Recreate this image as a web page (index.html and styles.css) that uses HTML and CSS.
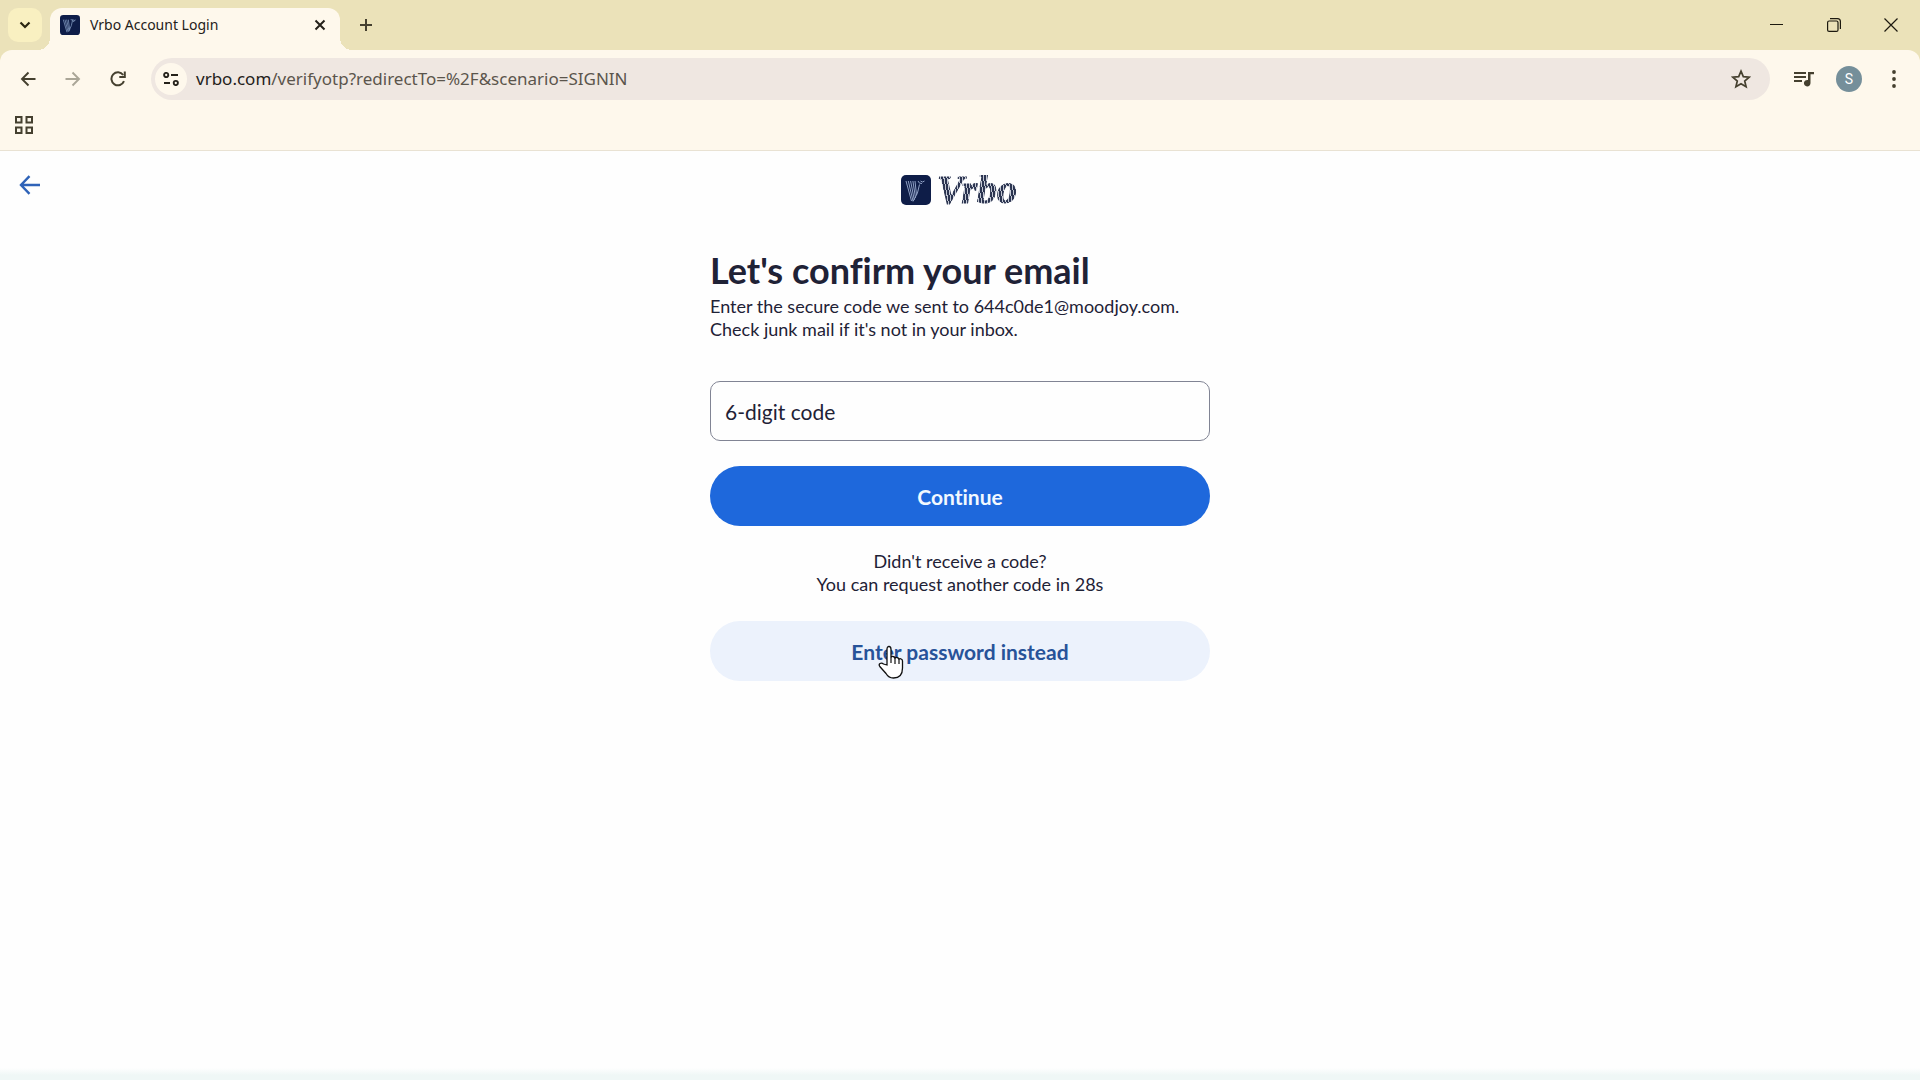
FILE: index.html
```html
<!DOCTYPE html>
<html lang="en">
<head>
<meta charset="utf-8">
<title>Vrbo Account Login</title>
<link rel="stylesheet" href="styles.css">
</head>
<body>
<header class="browser">
  <div class="tab-strip">
    <button class="tab-search" aria-label="Search tabs"><svg width="12" height="8" viewBox="0 0 12 8"><path d="M1.5 1.5 6 6l4.500-4.500" fill="none" stroke="currentColor" stroke-width="2.200"/></svg></button>
    <div class="tab">
      <svg class="favicon" width="20" height="20" viewBox="0 0 30 30"><rect width="30" height="30" rx="5" fill="#0e1d48"/><g fill="none" stroke="#7f97bd" stroke-width="1.200"><path d="M5 7l5.500 19M7.500 7l4.500 18M10 7l3.500 17M12.500 7l2 15"/><path d="M16 7l6 1M19 7q-1 9-6 18M23 7q-1 3-4 3"/></g></svg>
      <span class="tab-title">Vrbo Account Login</span>
      <button class="tab-close" aria-label="Close tab"><svg width="12" height="12" viewBox="0 0 12 12"><path d="M1.500 1.500l9 9M10.500 1.500l-9 9" stroke="currentColor" stroke-width="2"/></svg></button>
    </div>
    <button class="new-tab" aria-label="New tab"><svg width="14" height="14" viewBox="0 0 14 14"><path d="M7 1v12M1 7h12" stroke="currentColor" stroke-width="2"/></svg></button>
    <div class="window-controls">
      <button aria-label="Minimize"><svg width="14" height="14" viewBox="0 0 14 14"><path d="M0 6.500h13" stroke="currentColor"/></svg></button>
      <button aria-label="Restore"><svg width="14" height="14" viewBox="0 0 14 14" fill="none" stroke="currentColor" stroke-width="1.200"><rect x=".6" y="3" width="10.400" height="10.400" rx="1.500"/><path d="M3 .6h7.500q2.900 0 2.900 2.900v7.500"/></svg></button>
      <button aria-label="Close"><svg width="14" height="14" viewBox="0 0 14 14"><path d="M.5.5l13 13M13.500.5l-13 13" stroke="currentColor" stroke-width="1.200"/></svg></button>
    </div>
  </div>
  <div class="toolbar">
    <button class="tool" aria-label="Back"><svg width="16" height="16" viewBox="0 0 16 16"><path d="M15.500 8H2M8.500 1.500 2 8l6.500 6.500" fill="none" stroke="currentColor" stroke-width="1.900"/></svg></button>
    <button class="tool tool-off" aria-label="Forward"><svg width="16" height="16" viewBox="0 0 16 16"><path d="M.5 8H14M7.500 1.500 14 8l-6.500 6.500" fill="none" stroke="currentColor" stroke-width="1.900"/></svg></button>
    <button class="tool" aria-label="Reload"><svg width="16" height="16" viewBox="0 0 16 16"><path d="M14 10.200A6.500 6.500 0 1 1 13.200 4" fill="none" stroke="currentColor" stroke-width="2"/><path d="M15.800.5V7H9.300V5h4.500V.5z" fill="currentColor"/></svg></button>
    <div class="address">
      <button class="site-info" aria-label="Site information"><svg width="16" height="14" viewBox="0 0 16 14" fill="none" stroke="currentColor" stroke-width="1.900"><circle cx="3.200" cy="3" r="2.100"/><path d="M8 3h7M1 11h6"/><circle cx="12.800" cy="11" r="2.100"/></svg></button>
      <div class="url"><span class="host">vrbo.com</span>/verifyotp?redirectTo=%2F&amp;scenario=SIGNIN</div>
      <button class="star" aria-label="Bookmark this tab"><svg width="20" height="20" viewBox="0 0 20 20"><path d="M10 2.200l2.300 5.400 5.900.5-4.500 3.900 1.400 5.800-5.100-3.100-5.100 3.100 1.400-5.800L1.800 8.100l5.900-.5z" fill="none" stroke="currentColor" stroke-width="1.700"/></svg></button>
    </div>
    <button class="tool" aria-label="Media controls"><svg width="20" height="16" viewBox="0 0 20 16" fill="currentColor"><path d="M0 1h12v2H0zM0 5h12v2H0zM0 9h8v2H0zM14 1h6v2.200h-3.500V12A3.300 3.300 0 1 1 14 9z"/></svg></button>
    <button class="tool" aria-label="Profile"><span class="avatar">S</span></button>
    <button class="tool" aria-label="Menu"><svg width="4" height="18" viewBox="0 0 4 18" fill="currentColor"><circle cx="2" cy="2" r="1.900"/><circle cx="2" cy="9" r="1.900"/><circle cx="2" cy="16" r="1.900"/></svg></button>
  </div>
  <div class="bookmarks">
    <button class="apps" aria-label="Apps"><svg width="18" height="18" viewBox="0 0 18 18" fill="none" stroke="currentColor" stroke-width="2"><path d="M1 1h5.500v5.500H1zM11.500 1H17v5.500h-5.500zM1 11.500h5.500V17H1zM11.500 11.500H17V17h-5.500z"/></svg></button>
  </div>
</header>

<main class="page">
  <div class="page-head">
    <a class="back" href="#" aria-label="Back"><svg width="22" height="20" viewBox="0 0 22 20"><path d="M21 10H2M10.500 1.200 2 10l8.500 8.800" fill="none" stroke="currentColor" stroke-width="2.400"/></svg></a>
    <div class="logo">
      <svg width="30" height="30" viewBox="0 0 30 30"><rect width="30" height="30" rx="5" fill="#0e1d48"/><g fill="none" stroke="#8fa0c4" stroke-width="1"><path d="M5 6l5.500 20M7.300 6l4.700 20M9.600 6l3.700 19M11.900 6l2.600 17M14 6l1.500 14"/><path d="M17 6q1 3 4 2.500M19.500 6q2 2 4 0M18.500 9.500q-1 9-6.500 17"/></g></svg>
      <span class="wordmark">Vrbo</span>
    </div>
  </div>

  <form class="verify">
    <h1>Let's confirm your email</h1>
    <p class="intro">Enter the secure code we sent to 644c0de1@moodjoy.com.<br>Check junk mail if it's not in your inbox.</p>
    <div class="field">
      <label for="code">6-digit code</label>
      <input id="code" type="text" inputmode="numeric" maxlength="6">
    </div>
    <button class="primary" type="submit">Continue</button>
    <p class="resend">Didn't receive a code?<br>You can request another code in 28s</p>
    <button class="secondary" type="button">Enter password instead
      <svg class="pointer" width="26" height="34" viewBox="0 0 26 34"><path d="M9 20V4.500Q9 1.500 11 1.500t2 3V13q0-2 2-1.500 2 .2 2 2.500 0-2 2-1.500 2 .3 2 2.500 0-1.600 1.800-1.200 1.700.4 1.700 2.200v7q0 10-9 10-5 0-7.500-4.500L1.800 21.500Q.5 19.500 2 18.500q1.800-1 3.500.5z" fill="#fff" stroke="#111" stroke-width="1.300"/><path d="M13 13v5M17 14v5M21 15v4" stroke="#111" stroke-width="1.200"/></svg>
    </button>
  </form>
</main>
<footer class="page-edge"></footer>
</body>
</html>
```
FILE: styles.css
```css
* { box-sizing: border-box; }

body {
  display: flex;
  flex-direction: column;
  min-height: 100vh;
  margin: 0;
  background: #fefefe;
  color: #1f2236;
  font-family: Lato, "Liberation Sans", sans-serif;
  font-variant-ligatures: none;
}

button {
  display: flex;
  align-items: center;
  justify-content: center;
  padding: 0;
  border: 0;
  background: none;
  color: inherit;
  font: inherit;
  font-variant-ligatures: none;
}

svg { display: block; flex: none; }

/* Browser frame */
.browser {
  background: #ebe2b9;
  color: #45402f;
  font-family: "Noto Sans", "Open Sans", sans-serif;
}

.tab-strip {
  display: flex;
  align-items: center;
  height: 50px;
  padding: 0 1px 0 8px;
}

.tab-search {
  width: 34px;
  height: 34px;
  margin-right: 8px;
  border-radius: 10px;
  background: #f9f0c1;
  color: #2a2510;
}

.tab {
  position: relative;
  display: flex;
  align-items: center;
  align-self: flex-end;
  gap: 10px;
  width: 290px;
  height: 42px;
  padding: 0 12px 8px 10px;
  border-radius: 12px 12px 0 0;
  background: #fef8ec;
  color: #24211a;
}

.tab::before,
.tab::after {
  content: "";
  position: absolute;
  bottom: 0;
  width: 12px;
  height: 12px;
}

.tab::before {
  right: 100%;
  background: radial-gradient(circle at 0 0, transparent 12px, #fef8ec 12px);
}

.tab::after {
  left: 100%;
  background: radial-gradient(circle at 100% 0, transparent 12px, #fef8ec 12px);
}

.tab-title {
  flex: 1;
  font-size: 14px;
  line-height: 20px;
}

.tab-close { width: 16px; height: 20px; }

.new-tab { width: 36px; height: 36px; margin-left: 8px; }

.window-controls {
  display: flex;
  margin-left: auto;
  color: #1c190f;
}

.window-controls button { width: 57px; height: 50px; }

.toolbar {
  display: flex;
  align-items: center;
  gap: 9px;
  height: 58px;
  padding: 0 8px 0 10px;
  border-radius: 12px 12px 0 0;
  background: #fef8ec;
}

.tool { width: 36px; height: 36px; }
.tool-off { color: #aaa697; }

.address {
  display: flex;
  flex: 1;
  align-items: center;
  height: 42px;
  margin: 0 7px 0 6px;
  padding: 0 11px 0 4px;
  border-radius: 21px;
  background: #efe7e1;
}

.site-info {
  width: 32px;
  height: 32px;
  border-radius: 50%;
  background: #fef8ec;
  color: #24211a;
}

.url {
  flex: 1;
  padding-left: 9px;
  color: #5b554c;
  font-size: 17px;
  line-height: 24px;
}

.host { color: #24211a; }

.star { width: 36px; height: 36px; }

.avatar {
  width: 26px;
  height: 26px;
  border-radius: 50%;
  background: #758f9a;
  color: #fff;
  font-family: Roboto, sans-serif;
  font-size: 14px;
  line-height: 26px;
}

.bookmarks {
  display: flex;
  align-items: center;
  height: 43px;
  padding: 0 6px 8px;
  border-bottom: 1px solid #e9e2d3;
  background: #fef8ec;
}

.apps { width: 36px; height: 32px; }

/* Sign-in page */
.page { flex: 1; }

.page-head {
  display: grid;
  grid-template-columns: 1fr auto 1fr;
  padding: 24px 17px 0;
}

.back {
  justify-self: start;
  align-self: start;
  padding: 0 2px;
  color: #2f63b8;
}

.logo {
  display: flex;
  align-items: center;
  gap: 6px;
}

.wordmark {
  padding-right: 2px;
  background: repeating-linear-gradient(80deg, #2b3450 0 2px, #c3c8d4 2px 3px);
  background-clip: text;
  color: transparent;
  font-family: "Liberation Serif", serif;
  font-size: 40px;
  font-style: italic;
  font-weight: 700;
  line-height: 30px;
  -webkit-text-stroke: 1px transparent;
}

.verify {
  display: flex;
  flex-direction: column;
  width: 100%;
  max-width: 500px;
  margin: 42px auto 0;
}

h1 {
  margin: 0 0 2px;
  font-size: 36px;
  font-weight: 700;
  line-height: 46px;
}

.intro,
.resend {
  margin: 0;
  font-size: 18px;
  line-height: 23px;
}

.field {
  display: flex;
  align-items: center;
  height: 60px;
  margin: 40px 0 25px;
  padding: 0 14px;
  border: 1px solid #818494;
  border-radius: 10px;
  font-size: 21px;
}

.field input {
  flex: 1;
  min-width: 0;
  height: 40px;
  border: 0;
  outline: 0;
  background: none;
  font: inherit;
}

.primary,
.secondary {
  height: 60px;
  border-radius: 30px;
  font-size: 21px;
  font-weight: 700;
}

.primary { background: #1e68dc; color: #f2f9ff; }

.resend {
  margin: 24px 0 25px;
  text-align: center;
}

.secondary {
  position: relative;
  background: #ecf2fc;
  color: #275399;
}

.pointer {
  position: absolute;
  top: 24px;
  left: 168px;
}

.page-edge {
  height: 12px;
  background: linear-gradient(#fefefe, #eff7f6 60%);
}
```
